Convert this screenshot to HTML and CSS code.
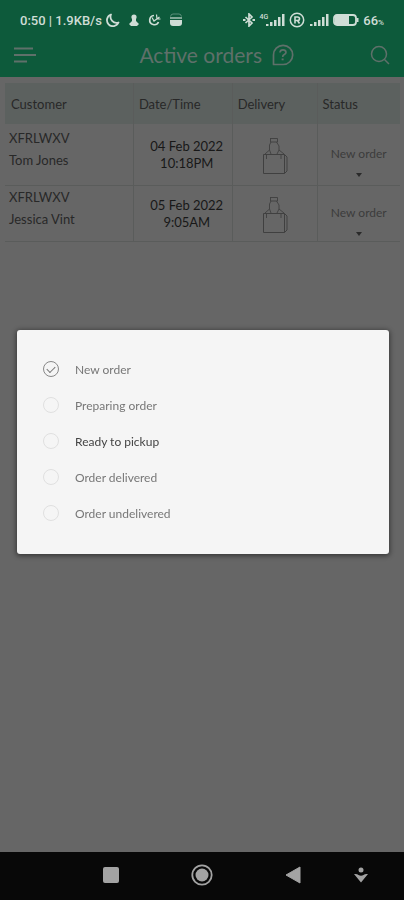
FILE: index.html
```html
<!DOCTYPE html>
<html lang="en">
<head>
    <meta charset="UTF-8">
    <meta name="viewport" content="width=device-width, initial-scale=1.0">
    <title>Active orders</title>
    <link rel="stylesheet" href="styles.css">
</head>
<body>
    <div class="status-bar">
        <div class="status-group">
            <span>0:50 | 1.9KB/s</span>
            <svg width="14" height="14" viewBox="0 0 14 14"><path d="M5 1.5A6 6 0 1 0 12.5 9.5A6 6 0 0 1 5 1.5Z" fill="none" stroke="currentColor" stroke-width="1.8" stroke-linejoin="round"/></svg>
            <svg class="spaced" width="12" height="14" viewBox="0 0 12 14"><circle cx="6" cy="4" r="2.6" fill="currentColor"/><path d="M4 5L8 5L8 8L11 11L9 13H3L1 11L4 8Z" fill="currentColor"/></svg>
            <svg class="spaced" width="13" height="14" viewBox="0 0 13 14"><path d="M6 2.5A4.6 4.6 0 1 0 10.500 9" fill="none" stroke="currentColor" stroke-width="1.7"/><path d="M4 4.5L6 8L11.5 4M8.500 1.500L9 6L12.500 6" fill="none" stroke="currentColor" stroke-width="1.2"/></svg>
            <svg class="spaced" width="14" height="14" viewBox="0 0 14 14"><path d="M1.5 3.500Q2 1 4 1H10Q12 1 12.5 3.500" fill="none" stroke="currentColor" opacity=".4"/><path d="M1 4H13V6H1Z" fill="currentColor" opacity=".6"/><path d="M1 7H13V10Q13 13 10 13H4Q1 13 1 10Z" fill="currentColor"/></svg>
        </div>
        <div class="status-group">
            <svg width="14" height="14" viewBox="0 0 14 14"><path d="M3.5 4L10 10L7 13V1L10 4L3.5 10" fill="none" stroke="currentColor" stroke-width="1.7"/><path d="M1 7H3.500M10.500 7H13" stroke="currentColor" stroke-width="2"/></svg>
            <span class="network">
                <small>4G</small>
                <svg width="20" height="14" viewBox="0 0 20 14"><path d="M1 11H3.5V13H1ZM5 9H7.5V13H5ZM9 7H11.5V13H9ZM13 4H15.5V13H13ZM17 1H19.5V13H17Z" fill="currentColor"/></svg>
            </span>
            <svg width="16" height="16" viewBox="0 0 16 16"><circle cx="8" cy="8" r="6.7" fill="none" stroke="currentColor" stroke-width="1.5"/><path d="M6 11.5V5H8.5Q10.5 5 10.5 6.7T8.5 8.5H6M8.5 8.5L10.5 11.5" fill="none" stroke="currentColor" stroke-width="1.6"/></svg>
            <svg width="20" height="14" viewBox="0 0 20 14"><path d="M1 11H3.5V13H1ZM5 9H7.5V13H5ZM9 7H11.5V13H9ZM13 4H15.5V13H13ZM17 1H19.5V13H17Z" fill="currentColor"/></svg>
            <svg width="26" height="14" viewBox="0 0 26 14"><rect x="1" y="2" width="22" height="10" rx="3" fill="none" stroke="currentColor" stroke-width="1.8"/><path d="M2 3H16V11H2Z" fill="currentColor"/><path d="M24.5 5V9" stroke="currentColor" stroke-width="2"/></svg>
            <span>66<small class="percent">%</small></span>
        </div>
    </div>

    <header class="app-bar">
        <button class="icon-btn" aria-label="Menu">
            <svg width="24" height="18" viewBox="0 0 24 18"><path d="M1 2.5H20M1 9H23M1 15.5H14" stroke="currentColor" stroke-width="2"/></svg>
        </button>
        <h1>Active orders</h1>
        <button class="icon-btn" aria-label="Help">
            <svg width="22" height="22" viewBox="0 0 22 22" fill="none" stroke="currentColor" stroke-width="1.7"><path d="M1.5 20.5V11A9.600 9.600 0 1 1 11 20.5Z" stroke-linejoin="round"/><path d="M8 8.5Q8.200 5.800 11 5.800T14 8.300Q14 9.800 12.300 10.600T10.700 13"/><path d="M10.600 14.500V16.300" stroke-width="2"/></svg>
        </button>
        <button class="icon-btn search-btn" aria-label="Search">
            <svg width="20" height="20" viewBox="0 0 20 20" fill="none" stroke="currentColor" stroke-width="1.500"><circle cx="9" cy="9" r="7.500"/><path d="M14.500 14.500L19 19"/></svg>
        </button>
    </header>

    <main class="content">
        <table class="orders">
            <thead>
                <tr>
                    <th class="col-customer">Customer</th>
                    <th class="col-date">Date/Time</th>
                    <th class="col-delivery">Delivery</th>
                    <th class="col-status">Status</th>
                </tr>
            </thead>
            <tbody>
                <tr>
                    <td class="customer">XFRLWXV<br>Tom Jones</td>
                    <td class="date">04 Feb 2022<br>10:18PM</td>
                    <td class="delivery">
                        <svg width="26" height="38" viewBox="0 0 26 38" fill="none" stroke="currentColor">
                            <g id="bag">
                                <path d="M1.500 17.500H22.500V36.500H1.500ZM22.500 17.500L25 20V34L22.500 36.500"/>
                                <path d="M8 1.500H15.500V5H8.500V1M9 5L7.500 8V13M14.500 5L17 9V13M7.500 13L3 17M17 13L22 17M7.500 13L9 17M17 13L15 17M4.500 18V22M19 18V22" stroke-width=".9"/>
                            </g>
                        </svg>
                    </td>
                    <td class="status"><button class="status-btn" aria-haspopup="dialog">New order</button></td>
                </tr>
                <tr>
                    <td class="customer">XFRLWXV<br>Jessica Vint</td>
                    <td class="date">05 Feb 2022<br>9:05AM</td>
                    <td class="delivery">
                        <svg width="26" height="38" viewBox="0 0 26 38" fill="none" stroke="currentColor"><use href="#bag"/></svg>
                    </td>
                    <td class="status"><button class="status-btn" aria-haspopup="dialog">New order</button></td>
                </tr>
            </tbody>
        </table>
    </main>

    <nav class="nav-bar">
        <button class="icon-btn" aria-label="Recent apps">
            <svg width="16" height="16" viewBox="0 0 16 16"><rect width="16" height="16" rx="2" fill="currentColor"/></svg>
        </button>
        <button class="icon-btn" aria-label="Home">
            <svg width="22" height="22" viewBox="0 0 22 22"><circle cx="11" cy="11" r="9.700" fill="none" stroke="currentColor" stroke-width="1.800"/><circle cx="11" cy="11" r="6.500" fill="currentColor"/></svg>
        </button>
        <button class="icon-btn" aria-label="Back">
            <svg width="16" height="18" viewBox="0 0 16 18"><path d="M15 1V17L1 9Z" fill="currentColor" stroke="currentColor" stroke-linejoin="round"/></svg>
        </button>
        <button class="icon-btn" aria-label="Hide navigation">
            <svg width="14" height="16" viewBox="0 0 14 16"><circle cx="7" cy="3" r="2.500" fill="currentColor"/><path d="M0 7Q3 6.500 4.500 8Q7 9.500 9.500 8Q11 6.500 14 7L7 15.500Z" fill="currentColor"/></svg>
        </button>
    </nav>

    <div class="overlay">
        <form class="dialog" role="dialog" aria-label="Order status">
            <label class="option"><input type="radio" name="status" checked> New order</label>
            <label class="option"><input type="radio" name="status"> Preparing order</label>
            <label class="option option-focus"><input type="radio" name="status"> Ready to pickup</label>
            <label class="option"><input type="radio" name="status"> Order delivered</label>
            <label class="option"><input type="radio" name="status"> Order undelivered</label>
        </form>
    </div>
</body>
</html>
```
FILE: styles.css
```css
:root {
    --green: #0d5a3b;
    --page: #666;
    --line: #5a5c5b;
    --head: #5c615f;
    --bar-text: #5f706a;
    --nav-height: 48px;
}
* { box-sizing: border-box; }
body {
    margin: 0; min-height: 100vh; display: flex; flex-direction: column;
    background: var(--page); color: #282828;
    font-family: Lato, "Liberation Sans", sans-serif; font-size: 13px;
}
svg { display: block; flex: none; }
button { font: inherit; color: inherit; background: none; border: none; padding: 0; cursor: pointer; }

.status-bar {
    display: flex; justify-content: space-between; align-items: center;
    height: 40px; padding: 0 20px; background: var(--green); color: #cfddd6;
    font-family: Roboto, sans-serif; font-size: 13px; font-weight: 500;
}
.status-group { display: flex; align-items: center; gap: 4px; white-space: nowrap; }
.status-group .spaced { margin-left: 4px; }
.network { display: flex; }
.network small { margin-right: -3px; font-size: 7px; line-height: 8px; }
.percent { font-size: 8px; }

.app-bar {
    display: flex; align-items: center; height: 37px; padding: 0 14px 7px 13px;
    background: var(--green); color: var(--bar-text);
}
.app-bar h1 { flex: 1; margin: 0 10px 0 0; text-align: right; font-size: 21px; font-weight: 400; line-height: 28px; }
.icon-btn { display: flex; align-items: center; justify-content: center; }
.search-btn { margin-left: 76px; }

.content { flex: 1; padding: 6px 4px 0 5px; }
.orders { width: 100%; border-collapse: collapse; table-layout: fixed; }
.orders th { height: 41px; padding: 0 5px; background: var(--head); text-align: left; font-weight: 400; }
.orders .col-customer { width: 32.5%; padding-left: 6px; }
.col-date { width: 25%; }
.col-delivery { width: 21.5%; }
.orders td { height: 56px; padding: 0; border-bottom: 1px solid var(--line); }
.orders tbody tr:first-child td { height: 61px; }
.orders th + th, .orders td + td { border-left: 1px solid var(--line); }
.orders .customer { padding-left: 4px; vertical-align: top; line-height: 22px; }
.orders tbody tr:first-child .customer { padding-top: 3px; }
.orders .date { padding: 2px 0 0 8px; text-align: center; line-height: 17px; color: #181818; }
.orders .delivery { padding-top: 4px; }
.delivery svg { margin: 0 auto; color: #404040; }
.status { text-align: center; color: #3c3c3c; font-size: 12px; }
.status-btn { display: inline-flex; flex-direction: column; align-items: center; gap: 12px; padding-top: 14px; }
.status-btn::after { content: ""; border: 3px solid transparent; border-top: 4px solid #2a2a2a; border-bottom: 0; }

.nav-bar {
    display: grid; grid-template-columns: repeat(3, 2fr) 1fr; align-items: center;
    height: var(--nav-height); padding: 0 20px 2px 65px; background: #080808; color: #a3a3a3;
}

.overlay {
    position: fixed; inset: 32px 0 var(--nav-height);
    display: flex; align-items: center; padding: 0 15px 0 17px;
}
.dialog {
    flex: 1; padding: 21px 26px 23px; background: #f5f5f5; border-radius: 3px;
    box-shadow: 0 1px 5px 1px rgba(0,0,0,0.45); font-size: 12px;
}
.option { display: flex; align-items: center; gap: 16px; height: 36px; color: #777; cursor: pointer; }
.option-focus { color: #444; }
.option input {
    appearance: none; display: grid; place-items: center;
    width: 16px; height: 16px; margin: 0; border: 1px solid #e0e0e0; border-radius: 50%;
}
.option input:checked { border-color: #888; }
.option input:checked::before {
    content: ""; width: 7px; height: 4px; margin-bottom: 2px;
    border: solid #777; border-width: 0 0 1px 1px; transform: rotate(-45deg);
}
```
